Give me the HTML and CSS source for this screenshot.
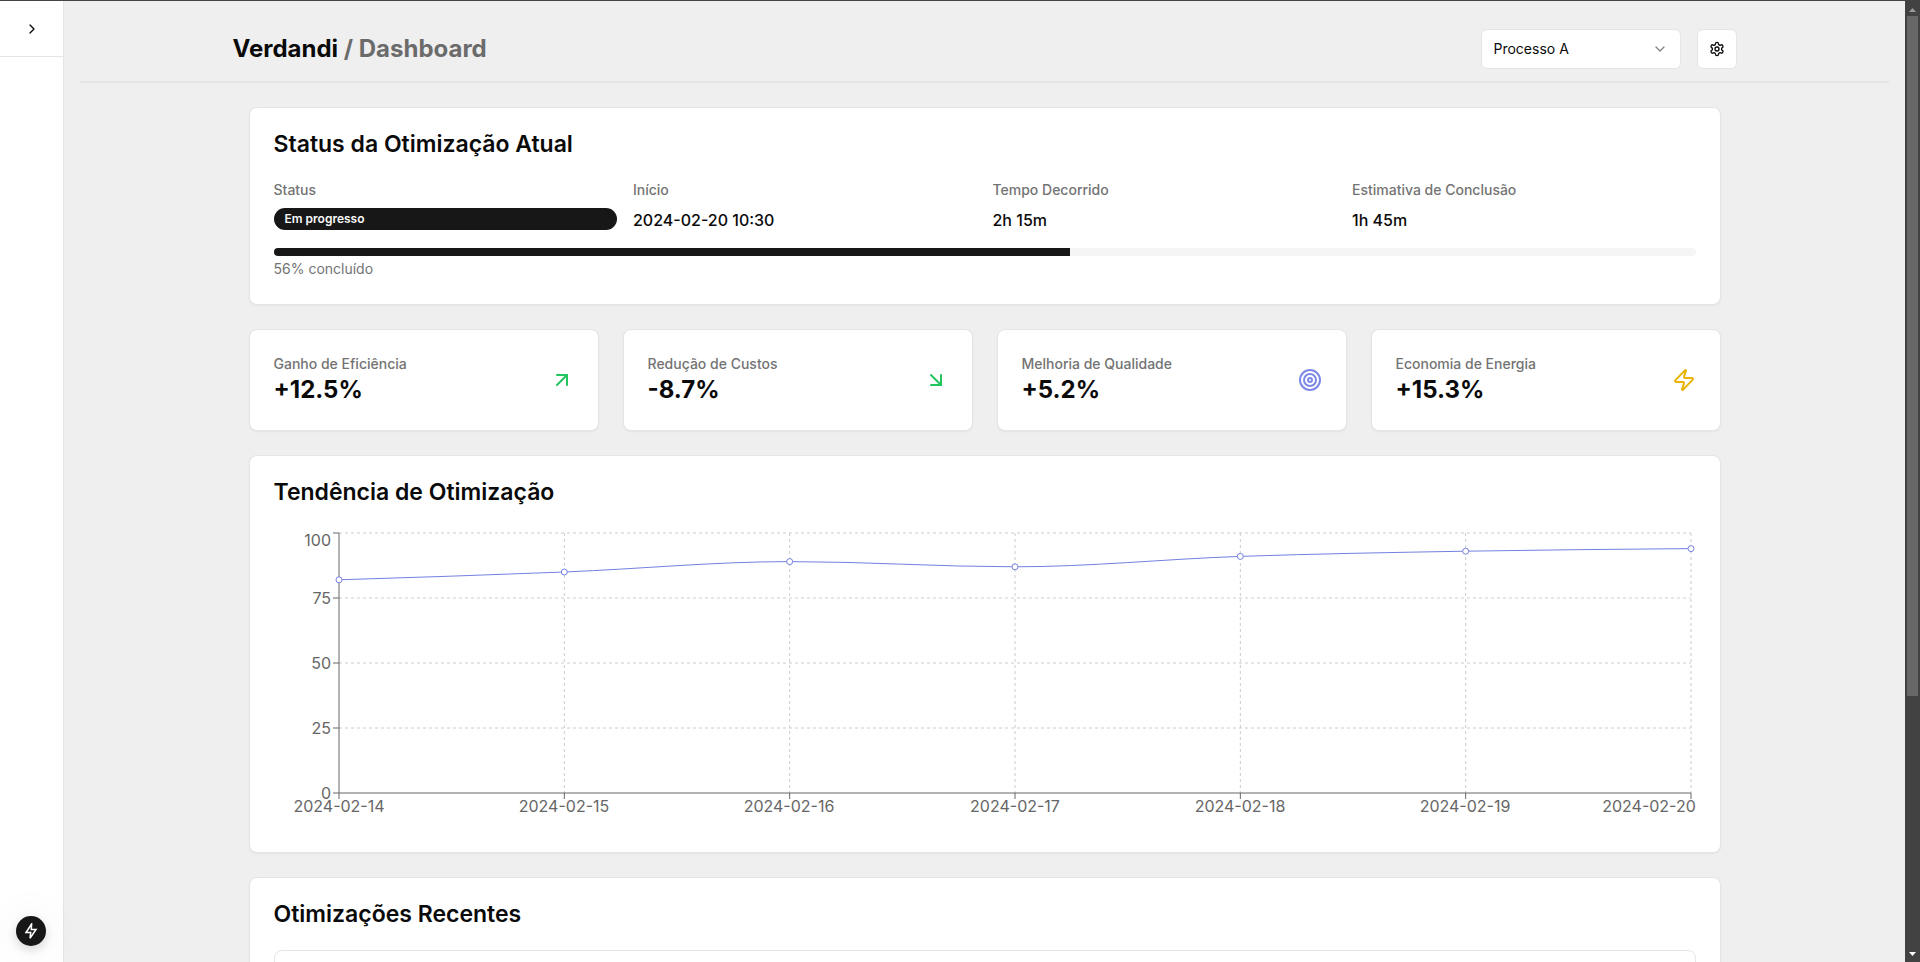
FILE: index.html
```html
<!DOCTYPE html>
<html lang="pt-BR">
<head>
<meta charset="utf-8">
<meta name="viewport" content="width=device-width, initial-scale=1">
<title>Verdandi / Dashboard</title>
<link rel="stylesheet" href="styles.css">
</head>
<body>
<div class="app">
  <aside class="sidebar">
    <div class="sidebar-head">
      <button class="toggle" type="button" aria-label="Expandir menu">
        <svg class="icon-sm" viewBox="0 0 24 24"><path d="m9 18 6-6-6-6"/></svg>
      </button>
    </div>
    <button class="fab" type="button" aria-label="Ações rápidas">
      <svg class="icon-fab" viewBox="0 0 16 16"><path d="M8.6 1 3 9.5h4.7L7 15.2l6-8.7H8.3z"/></svg>
    </button>
  </aside>

  <div class="page">
    <header class="topbar">
      <div class="topbar-inner">
        <h1 class="title">Verdandi <span class="crumb">/ Dashboard</span></h1>
        <div class="actions">
          <div class="select-wrap">
            <select class="select" aria-label="Processo">
              <option>Processo A</option>
              <option>Processo B</option>
            </select>
            <svg class="icon-sm select-arrow" viewBox="0 0 24 24"><path d="m6 9 6 6 6-6"/></svg>
          </div>
          <button class="icon-button" type="button" aria-label="Configurações">
            <svg class="icon-sm" viewBox="0 0 24 24"><path d="M12.22 2h-.44a2 2 0 0 0-2 2v.18a2 2 0 0 1-1 1.73l-.43.25a2 2 0 0 1-2 0l-.15-.08a2 2 0 0 0-2.73.73l-.22.38a2 2 0 0 0 .73 2.73l.15.1a2 2 0 0 1 1 1.72v.51a2 2 0 0 1-1 1.74l-.15.09a2 2 0 0 0-.73 2.73l.22.38a2 2 0 0 0 2.73.73l.15-.08a2 2 0 0 1 2 0l.43.25a2 2 0 0 1 1 1.73V20a2 2 0 0 0 2 2h.44a2 2 0 0 0 2-2v-.18a2 2 0 0 1 1-1.73l.43-.25a2 2 0 0 1 2 0l.15.08a2 2 0 0 0 2.73-.73l.22-.39a2 2 0 0 0-.73-2.73l-.15-.08a2 2 0 0 1-1-1.74v-.5a2 2 0 0 1 1-1.74l.15-.09a2 2 0 0 0 .73-2.73l-.22-.38a2 2 0 0 0-2.73-.73l-.15.08a2 2 0 0 1-2 0l-.43-.25a2 2 0 0 1-1-1.73V4a2 2 0 0 0-2-2z"/><circle cx="12" cy="12" r="3"/></svg>
          </button>
        </div>
      </div>
    </header>

    <main class="content">
      <section class="card">
        <h2 class="card-title">Status da Otimização Atual</h2>
        <div class="status-grid">
          <div class="field"><p class="label">Status</p><div class="badge">Em progresso</div></div>
          <div class="field"><p class="label">Início</p><p class="value">2024-02-20 10:30</p></div>
          <div class="field"><p class="label">Tempo Decorrido</p><p class="value">2h 15m</p></div>
          <div class="field"><p class="label">Estimativa de Conclusão</p><p class="value">1h 45m</p></div>
        </div>
        <div class="progress" role="progressbar" aria-label="Progresso" aria-valuenow="56" aria-valuemin="0" aria-valuemax="100"><div class="progress-bar" style="width: 56%"></div></div>
        <p class="progress-text">56% concluído</p>
      </section>

      <section class="metrics">
        <article class="card metric">
          <div><p class="label">Ganho de Eficiência</p><p class="number">+12.5%</p></div>
          <svg class="icon green" viewBox="0 0 24 24"><path d="M7 7h10v10"/><path d="M7 17 17 7"/></svg>
        </article>
        <article class="card metric">
          <div><p class="label">Redução de Custos</p><p class="number">-8.7%</p></div>
          <svg class="icon green" viewBox="0 0 24 24"><path d="m7 7 10 10"/><path d="M17 7v10H7"/></svg>
        </article>
        <article class="card metric">
          <div><p class="label">Melhoria de Qualidade</p><p class="number">+5.2%</p></div>
          <svg class="icon blue" viewBox="0 0 24 24"><circle cx="12" cy="12" r="10"/><circle cx="12" cy="12" r="6"/><circle cx="12" cy="12" r="2"/></svg>
        </article>
        <article class="card metric">
          <div><p class="label">Economia de Energia</p><p class="number">+15.3%</p></div>
          <svg class="icon yellow" viewBox="0 0 24 24"><path d="M4 14a1 1 0 0 1-.78-1.63l9.9-10.2a.5.5 0 0 1 .86.46l-1.92 6.02A1 1 0 0 0 13 10h7a1 1 0 0 1 .78 1.63l-9.9 10.2a.5.5 0 0 1-.86-.46l1.92-6.02A1 1 0 0 0 11 14z"/></svg>
        </article>
      </section>

      <section class="card">
        <h2 class="card-title">Tendência de Otimização</h2>
        <svg class="chart" viewBox="0 0 1422 300" role="img" aria-label="Tendência de otimização">
          <g class="grid">
            <path d="M65 5H1417M65 70H1417M65 135H1417M65 200H1417"/>
            <path d="M290.33 5V265M515.67 5V265M741 5V265M966.33 5V265M1191.67 5V265M1417 5V265"/>
          </g>
          <g class="axis">
            <path d="M65 265H1417M65 5V265"/>
            <path d="M59 5H65M59 70H65M59 135H65M59 200H65M59 265H65"/>
            <path d="M65 265V271M290.33 265V271M515.67 265V271M741 265V271M966.33 265V271M1191.67 265V271M1417 265V271"/>
          </g>
          <g class="tick tick-y">
            <text x="57" y="18">100</text>
            <text x="57" y="76">75</text>
            <text x="57" y="141">50</text>
            <text x="57" y="206">25</text>
            <text x="57" y="271">0</text>
          </g>
          <g class="tick tick-x">
            <text x="65" y="284">2024-02-14</text>
            <text x="290" y="284">2024-02-15</text>
            <text x="515" y="284">2024-02-16</text>
            <text x="741" y="284">2024-02-17</text>
            <text x="966" y="284">2024-02-18</text>
            <text x="1191" y="284">2024-02-19</text>
            <text x="1375" y="284">2024-02-20</text>
          </g>
          <path class="line" d="M65 51.8C140.11 49.42 215.22 47.03 290.33 44C365.44 40.97 440.56 33.6 515.67 33.6C590.78 33.6 665.89 38.8 741 38.8C816.11 38.8 891.22 31 966.33 28.4C1041.44 25.8 1116.56 24.5 1191.67 23.2C1266.78 21.9 1341.89 21.25 1417 20.6"/>
          <g class="dots">
            <circle cx="65" cy="51.8" r="3"/><circle cx="290.33" cy="44" r="3"/><circle cx="515.67" cy="33.6" r="3"/><circle cx="741" cy="38.8" r="3"/><circle cx="966.33" cy="28.4" r="3"/><circle cx="1191.67" cy="23.2" r="3"/><circle cx="1417" cy="20.6" r="3"/>
          </g>
        </svg>
      </section>

      <section class="card">
        <h2 class="card-title">Otimizações Recentes</h2>
        <div class="table-box"></div>
      </section>
    </main>
  </div>

  <div class="scrollbar" aria-hidden="true">
    <svg class="scroll-arrow up" viewBox="0 0 15 15"><path d="M4 11h7L7.5 7z"/></svg>
    <div class="track"><div class="thumb"></div></div>
    <svg class="scroll-arrow down" viewBox="0 0 15 15"><path d="M4 5h7L7.5 9z"/></svg>
  </div>
</div>
</body>
</html>
```
FILE: styles.css
```css
* { box-sizing: border-box; margin: 0; padding: 0; }

body {
  font-family: Inter, "Liberation Sans", sans-serif;
  font-size: 16px;
  line-height: 24px;
  color: #0a0a0a;
  background: #efefef;
}

button, select { font: inherit; color: inherit; }

svg { display: block; flex: none; fill: none; stroke: currentColor; stroke-width: 2; stroke-linecap: round; stroke-linejoin: round; }

.app { display: flex; height: 100vh; overflow: hidden; border-top: 1px solid #444; }

.sidebar {
  display: flex;
  flex-direction: column;
  justify-content: space-between;
  flex: none;
  width: 64px;
  background: #fff;
  border-right: 1px solid #e5e5e5;
}
.sidebar-head { display: flex; justify-content: center; align-items: center; height: 56px; border-bottom: 1px solid #e5e5e5; }
.toggle { display: flex; align-items: center; justify-content: center; width: 40px; height: 40px; border: 0; background: none; }
.icon-sm { width: 16px; height: 16px; }
.fab {
  display: flex;
  align-items: center;
  justify-content: center;
  width: 30px;
  height: 30px;
  margin: 0 16px 16px;
  border: 0;
  border-radius: 50%;
  background: #171717;
  color: #fff;
  box-shadow: 0 0 40px rgba(0, 0, 0, 0.08), 0 4px 10px rgba(0, 0, 0, 0.14);
}
.icon-fab { width: 16px; height: 16px; stroke-width: 1.5; stroke-linejoin: miter; }

.page { flex: 1; min-width: 0; padding: 28px 16px 0; overflow: hidden; }
.topbar { border-bottom: 2px solid #e5e5e5; }
.topbar-inner {
  display: flex;
  align-items: center;
  justify-content: space-between;
  max-width: 1536px;
  margin: 0 auto;
  padding: 0 16px 12px;
}
.title { font-size: 24px; line-height: 32px; font-weight: 700; }
.crumb { color: #6b6b6b; }
.actions { display: flex; gap: 16px; }
.select-wrap { position: relative; }
.select {
  appearance: none;
  width: 200px;
  height: 40px;
  padding: 0 12px;
  border: 1px solid #e5e5e5;
  border-radius: 6px;
  background: #fff;
  font-size: 14px;
}
.select-arrow { position: absolute; right: 13px; top: 12px; color: #858585; pointer-events: none; }
.icon-button {
  display: flex;
  align-items: center;
  justify-content: center;
  width: 40px;
  height: 40px;
  border: 1px solid #e5e5e5;
  border-radius: 6px;
  background: #fff;
}

.content { display: flex; flex-direction: column; gap: 24px; max-width: 1536px; margin: 0 auto; padding: 24px 32px; }
.card {
  padding: 24px;
  background: #fff;
  border: 1px solid #e5e5e5;
  border-radius: 8px;
  box-shadow: 0 1px 2px rgba(0, 0, 0, 0.05);
}
.card-title { margin-bottom: 24px; font-size: 23px; line-height: 24px; font-weight: 600; }
.label { font-size: 14px; line-height: 20px; font-weight: 500; color: #737373; }

.status-grid { display: grid; grid-template-columns: repeat(4, 1fr); gap: 16px; }
.field { display: flex; flex-direction: column; gap: 8px; }
.value { font-weight: 500; }
.badge {
  padding: 3px 11px;
  border-radius: 11px;
  background: #171717;
  color: #fafafa;
  font-size: 12px;
  line-height: 16px;
  font-weight: 600;
}
.progress { height: 8px; margin-top: 16px; border-radius: 4px; background: #f5f5f5; overflow: hidden; }
.progress-bar { height: 100%; background: #171717; }
.progress-text { margin: 4px 0 2px; font-size: 14px; line-height: 18px; color: #737373; }

.metrics { display: grid; grid-template-columns: repeat(4, 1fr); gap: 24px; }
.metric { display: flex; align-items: center; justify-content: space-between; }
.number { font-size: 24px; line-height: 32px; font-weight: 700; }
.icon { width: 24px; height: 24px; }
.green { color: #22c55e; }
.blue { color: #7c8ae5; }
.yellow { color: #eab308; }

.chart { width: 100%; overflow: visible; stroke-width: 1; }
.chart path, .chart circle { stroke-linecap: butt; }
.grid { stroke: #ccc; stroke-dasharray: 3 3; }
.axis { stroke: #666; }
.tick { fill: #666; stroke: none; font-size: 16px; }
.tick-y { text-anchor: end; }
.tick-x { text-anchor: middle; }
.line { stroke: #7480e0; }
.dots { fill: #fff; stroke: #7480e0; }

.table-box { height: 240px; border: 1px solid #e5e5e5; border-radius: 8px; }

.scrollbar { display: flex; flex-direction: column; flex: none; width: 15px; background: #424242; }
.scroll-arrow { width: 15px; height: 15px; stroke: none; }
.up { fill: #999; }
.down { fill: #fff; }
.track { flex: 1; padding: 0 2px; }
.thumb { height: 73%; background: #686868; }
```
